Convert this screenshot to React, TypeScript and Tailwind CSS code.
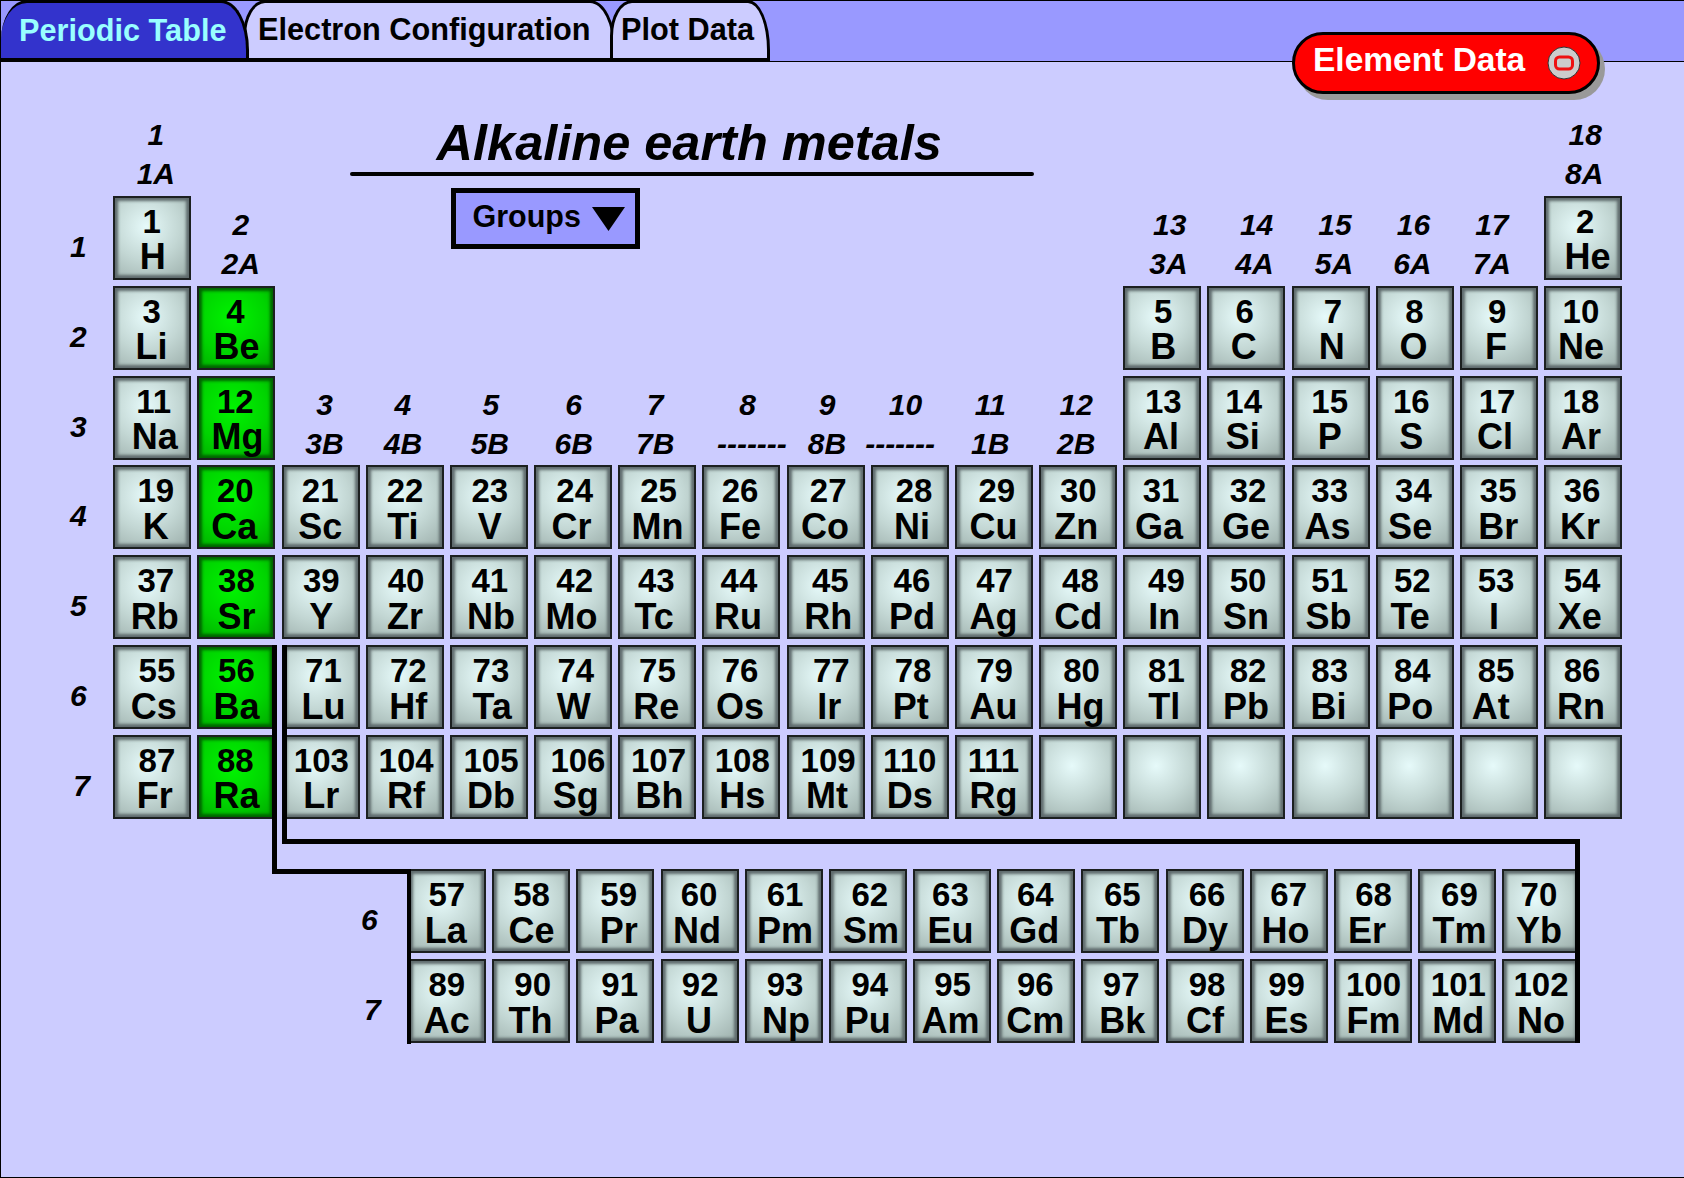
const PITCH = 84.18;
const SCALE = 1684 / 1568;

const table: [number, number, number, string, number, number][] = [
  [1, 1, 1, 'H', 141, 142], [1, 18, 2, 'He', 1476, 1478],
  [2, 1, 3, 'Li', 141, 141], [2, 2, 4, 'Be', 219, 220], [2, 13, 5, 'B', 1083, 1083], [2, 14, 6, 'C', 1159, 1158],
  [2, 15, 7, 'N', 1241, 1240], [2, 16, 8, 'O', 1317, 1316], [2, 17, 9, 'F', 1394, 1393], [2, 18, 10, 'Ne', 1472, 1472],
  [3, 1, 11, 'Na', 143, 144], [3, 2, 12, 'Mg', 219, 221], [3, 13, 13, 'Al', 1083, 1081], [3, 14, 14, 'Si', 1158, 1157],
  [3, 15, 15, 'P', 1238, 1238], [3, 16, 16, 'S', 1314, 1314], [3, 17, 17, 'Cl', 1394, 1392], [3, 18, 18, 'Ar', 1472, 1472],
];

// [atomic number, symbol, number centre x, symbol centre x] - x is measured on the 1568 wide picture
const row4: [number, string, number, number][] = [
  [19, 'K', 145, 145], [20, 'Ca', 219, 218], [21, 'Sc', 298, 298], [22, 'Ti', 377, 375], [23, 'V', 456, 456], [24, 'Cr', 535, 532],
  [25, 'Mn', 613, 612], [26, 'Fe', 689, 689], [27, 'Co', 771, 768], [28, 'Ni', 851, 849], [29, 'Cu', 928, 925], [30, 'Zn', 1004, 1002],
  [31, 'Ga', 1081, 1079], [32, 'Ge', 1162, 1160], [33, 'As', 1238, 1236], [34, 'Se', 1316, 1313], [35, 'Br', 1395, 1395], [36, 'Kr', 1473, 1471],
];
const row5: [number, string, number, number][] = [
  [37, 'Rb', 145, 144], [38, 'Sr', 220, 220], [39, 'Y', 299, 299], [40, 'Zr', 378, 377], [41, 'Nb', 456, 457], [42, 'Mo', 535, 532],
  [43, 'Tc', 611, 609], [44, 'Ru', 688, 687], [45, 'Rh', 773, 771], [46, 'Pd', 849, 849], [47, 'Ag', 926, 925], [48, 'Cd', 1006, 1004],
  [49, 'In', 1086, 1084], [50, 'Sn', 1162, 1160], [51, 'Sb', 1238, 1237], [52, 'Te', 1315, 1313], [53, 'I', 1393, 1391], [54, 'Xe', 1473, 1471],
];
const row6: [number, string, number, number][] = [
  [55, 'Cs', 146, 143], [56, 'Ba', 220, 220], [71, 'Lu', 301, 301], [72, 'Hf', 380, 380], [73, 'Ta', 457, 458], [74, 'W', 536, 534],
  [75, 'Re', 612, 611], [76, 'Os', 689, 689], [77, 'Ir', 774, 772], [78, 'Pt', 850, 848], [79, 'Au', 926, 925], [80, 'Hg', 1007, 1006],
  [81, 'Tl', 1086, 1084], [82, 'Pb', 1162, 1160], [83, 'Bi', 1238, 1237], [84, 'Po', 1315, 1313], [85, 'At', 1393, 1388], [86, 'Rn', 1473, 1472],
];
const row7: [number, string, number, number][] = [
  [87, 'Fr', 146, 144], [88, 'Ra', 219, 220], [103, 'Lr', 299, 299], [104, 'Rf', 378, 378], [105, 'Db', 457, 457], [106, 'Sg', 538, 536],
  [107, 'Bh', 613, 614], [108, 'Hs', 691, 691], [109, 'Mt', 771, 770], [110, 'Ds', 847, 847], [111, 'Rg', 925, 925],
];
const lanthanides: [number, string, number, number][] = [
  [57, 'La', 416, 415], [58, 'Ce', 495, 495], [59, 'Pr', 576, 576], [60, 'Nd', 651, 649], [61, 'Pm', 731, 731], [62, 'Sm', 810, 811], [63, 'Eu', 885, 885],
  [64, 'Gd', 964, 963], [65, 'Tb', 1045, 1041], [66, 'Dy', 1124, 1122], [67, 'Ho', 1200, 1197], [68, 'Er', 1279, 1273], [69, 'Tm', 1359, 1359], [70, 'Yb', 1433, 1433],
];
const actinides: [number, string, number, number][] = [
  [89, 'Ac', 416, 416], [90, 'Th', 496, 494], [91, 'Pa', 577, 574], [92, 'U', 652, 651], [93, 'Np', 731, 732], [94, 'Pu', 810, 808], [95, 'Am', 887, 885],
  [96, 'Cm', 964, 964], [97, 'Bk', 1044, 1045], [98, 'Cf', 1124, 1122], [99, 'Es', 1198, 1198], [100, 'Fm', 1279, 1279], [101, 'Md', 1358, 1358], [102, 'No', 1435, 1435],
];

[[4, row4], [5, row5], [6, row6]].forEach(([row, list]) => {
  (list as [number, string, number, number][]).forEach((e, i) => table.push([row as number, i + 1, e[0], e[1], e[2], e[3]]));
});
row7.forEach((e, i) => table.push([7, i + 1, e[0], e[1], e[2], e[3]]));

const alkaline = [4, 12, 20, 38, 56, 88];

// column, row the label sits in, top text, bottom text, x on the 1568 picture
const groups: [number, number, string, string, number, number][] = [
  [1, 0, '1', '1A', 145, 145], [2, 1, '2', '2A', 224, 224], [3, 3, '3', '3B', 302, 302], [4, 3, '4', '4B', 375, 375],
  [5, 3, '5', '5B', 457, 456], [6, 3, '6', '6B', 534, 534], [7, 3, '7', '7B', 610, 610], [8, 3, '8', '-------', 696, 700],
  [9, 3, '9', '8B', 770, 770], [10, 3, '10', '-------', 843, 838], [11, 3, '11', '1B', 922, 922], [12, 3, '12', '2B', 1002, 1002],
  [13, 1, '13', '3A', 1089, 1088], [14, 1, '14', '4A', 1170, 1168], [15, 1, '15', '5A', 1243, 1242], [16, 1, '16', '6A', 1316, 1315],
  [17, 1, '17', '7A', 1389, 1389], [18, 0, '18', '8A', 1476, 1475],
];

const periodX = [72, 72, 72, 72, 72, 72, 75];

function shift(x: number, centre: number) {
  return { transform: `translateX(${(x * SCALE - centre).toFixed(1)}px)` };
}

function Tile({ num, sym, numX, symX, centre }: { num?: number; sym?: string; numX?: number; symX?: number; centre: number }) {
  const green = num !== undefined && alkaline.includes(num);
  return (
    <div
      className={`h-[84px] w-[78px] border-2 border-[#1c2020] pt-[6px] text-center text-[33px] leading-[35.5px] font-bold text-black ${
        green
          ? 'bg-[radial-gradient(circle_at_45%_38%,#00f400_0%,#00d400_55%,#00a800_100%)] shadow-[inset_0_0_3px_3px_#006400]'
          : 'bg-[radial-gradient(circle_at_42%_36%,#e6fafa_0%,#c3d7d4_50%,#9bada9_100%)] shadow-[inset_0_0_3px_3px_#5f6b6d]'
      }`}
    >
      {num !== undefined && (
        <>
          <div style={shift(numX as number, centre)}>{num}</div>
          <div className="text-[36px]" style={shift(symX as number, centre)}>
            {sym}
          </div>
        </>
      )}
    </div>
  );
}

function cellCentre(col: number) {
  return 152 + PITCH * (col - 1);
}

export default function App() {
  return (
    <div className="relative h-[1178px] w-[1684px] overflow-hidden border-b border-l border-black bg-[#ccccff] font-['Liberation_Sans',Arial,sans-serif]">
      {/* tab bar */}
      <div className="flex h-[62px] items-end border-t border-b border-black bg-[#9999ff]">
        <div className="z-10 flex h-[61px] w-[248px] items-start rounded-tl-[26px_40px] rounded-tr-[28px_50px] border-[3px] border-l-0 border-black bg-[#3333cc] pt-[10px] pl-[18px] text-[30.7px] leading-[36px] font-bold whitespace-nowrap text-[#99ffff]">
          Periodic Table
        </div>
        <div className="-ml-[6px] flex h-[61px] w-[373px] items-start rounded-tl-[22px_36px] rounded-tr-[26px_50px] border-[3px] border-black bg-[#ccccff] pt-[9px] pl-[12px] text-[30.7px] leading-[36px] font-bold whitespace-nowrap text-black">
          Electron Configuration
        </div>
        <div className="-ml-[6px] flex h-[61px] w-[160px] items-start rounded-tl-[22px_36px] rounded-tr-[22px_50px] border-[3px] border-black bg-[#ccccff] pt-[9px] pl-[8px] text-[30.7px] leading-[36px] font-bold whitespace-nowrap text-black">
          Plot Data
        </div>
      </div>

      {/* element data pill */}
      <div className="absolute top-[32px] left-[1291px] flex h-[62px] w-[308px] items-center rounded-full border-[3px] border-black bg-[#ff0000] pl-[18px] text-[33.5px] font-bold whitespace-nowrap text-white shadow-[5px_6px_0_#999999]">
        <span className="-mt-[5px]">Element Data</span>
        <svg className="ml-[22px]" width="34" height="34" viewBox="0 0 34 34">
          <circle cx="17" cy="17" r="16" fill="#cccccc" stroke="#333333" />
          <rect x="8.5" y="11" width="17" height="12" rx="4" fill="#cccccc" stroke="#ee1111" strokeWidth="3" />
        </svg>
      </div>

      {/* main table */}
      <div className="mt-[44px] grid grid-cols-[106px_repeat(18,78px)] grid-rows-[repeat(8,84px)] gap-x-[6.18px] gap-y-[5.85px]">
        {/* heading and series menu */}
        <div className="col-start-4 col-end-13 row-start-1 row-end-3 ml-[68px]">
          <div className="pt-[9px] pr-[4px] pb-[1px] text-center text-[50.5px] leading-[56px] font-bold whitespace-nowrap text-black italic">Alkaline earth metals</div>
          <div className="h-[4px] w-[684px] rounded-full bg-black" />
          <div className="mt-[12px] ml-[101px] flex h-[61px] w-[189px] items-start border-[5px] border-black bg-[#9999ff] pt-[5px] pl-[17px] text-[30.5px] leading-[36px] font-bold text-black">
            Groups
            <svg className="mt-[9px] ml-[11px]" width="33" height="24" viewBox="0 0 33 24">
              <polygon points="0,0 33,0 16.5,24" fill="#000000" />
            </svg>
          </div>
        </div>

        {groups.map(([col, row, top, bottom, topX, botX]) => (
          <div
            key={col}
            className="-mb-[3px] flex flex-col justify-end text-center text-[30px] leading-[39px] font-bold text-black italic"
            style={{ gridColumnStart: col + 1, gridRowStart: row + 1 }}
          >
            <div className="whitespace-nowrap" style={shift(topX, cellCentre(col))}>
              {top}
            </div>
            <div className="whitespace-nowrap" style={shift(botX, cellCentre(col))}>
              {bottom}
            </div>
          </div>
        ))}

        {periodX.map((x, i) => (
          <div
            key={i}
            className="col-start-1 flex items-center justify-center pt-[17px] text-[30px] font-bold text-black italic"
            style={{ gridRowStart: i + 2, transform: `translateX(${(x * SCALE - 53).toFixed(1)}px)` }}
          >
            {i + 1}
          </div>
        ))}

        {table.map(([row, col, num, sym, nx, sx]) => (
          <div key={num} style={{ gridColumnStart: col + 1, gridRowStart: row + 1 }}>
            <Tile num={num} sym={sym} numX={nx} symX={sx} centre={cellCentre(col)} />
          </div>
        ))}
        {[12, 13, 14, 15, 16, 17, 18].map((col) => (
          <div key={col} style={{ gridColumnStart: col + 1, gridRowStart: 8 }}>
            <Tile centre={cellCentre(col)} />
          </div>
        ))}
      </div>

      {/* f block */}
      <div className="mt-[50.5px] ml-[407px] grid grid-cols-[repeat(14,78px)] gap-x-[6.18px] gap-y-[6px]">
        {[lanthanides, actinides].map((series) =>
          series.map(([num, sym, nx, sx], i) => (
            <Tile key={num} num={num} sym={sym} numX={nx} symX={sx} centre={447 + PITCH * i} />
          )),
        )}
      </div>

      {/* period labels of the f block */}
      <div className="absolute top-[902px] left-[360px] text-[30px] leading-[36px] font-bold text-black italic">6</div>
      <div className="absolute top-[992px] left-[363px] text-[30px] leading-[36px] font-bold text-black italic">7</div>

      {/* bracket lines running over the tiles */}
      <div className="absolute top-[645px] left-[271px] h-[228px] w-[5px] bg-black" />
      <div className="absolute top-[869px] left-[271px] h-[5px] w-[139px] bg-black" />
      <div className="absolute top-[645px] left-[281px] h-[198px] w-[5px] bg-black" />
      <div className="absolute top-[839px] left-[281px] h-[5px] w-[1298px] bg-black" />
      <div className="absolute top-[839px] left-[1574px] h-[204px] w-[5px] bg-black" />
      <div className="absolute top-[869px] left-[406px] h-[175px] w-[4px] bg-black" />
    </div>
  );
}
